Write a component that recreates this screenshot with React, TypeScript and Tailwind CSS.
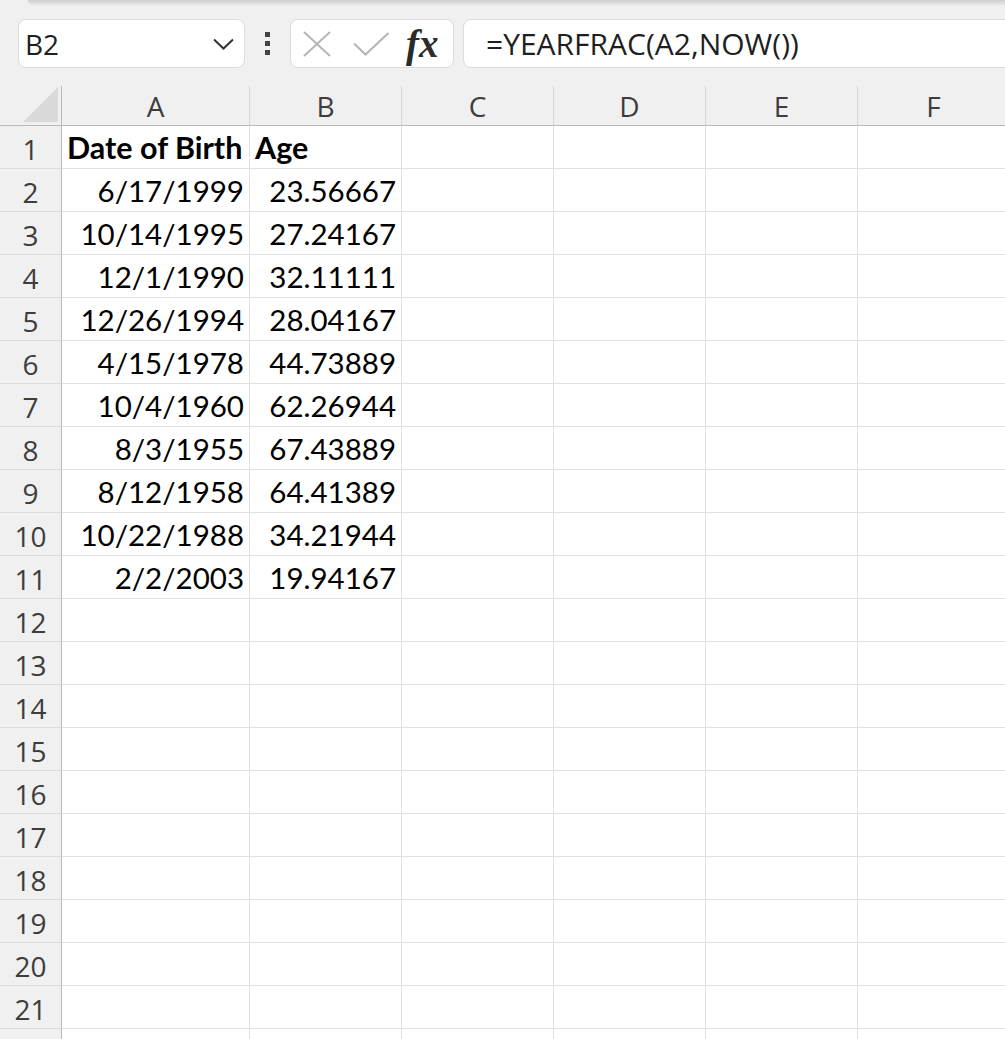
const COLS = ["A", "B", "C", "D", "E", "F"];
const WIDTHS = ["w-[188px]", "w-[152px]", "w-[152px]", "w-[152px]", "w-[152px]", "w-[152px]"];

const DATA: [string, string][] = [
  ["6/17/1999", "23.56667"],
  ["10/14/1995", "27.24167"],
  ["12/1/1990", "32.11111"],
  ["12/26/1994", "28.04167"],
  ["4/15/1978", "44.73889"],
  ["10/4/1960", "62.26944"],
  ["8/3/1955", "67.43889"],
  ["8/12/1958", "64.41389"],
  ["10/22/1988", "34.21944"],
  ["2/2/2003", "19.94167"],
];

function FormulaBar() {
  return (
    <div className="flex h-[49px] items-center pl-[18px]">
      <div className="flex h-[49px] w-[227px] items-center justify-between rounded-[8px] border border-[#dcdcdc] bg-white pl-[6px] pr-[10px]">
        <span className="text-[28px] leading-none text-[#1f1f1f]">B2</span>
        <svg width="21" height="12" viewBox="0 0 21 12" fill="none">
          <path d="M1 1.5 L10.5 10.5 L20 1.5" stroke="#333" strokeWidth="2" />
        </svg>
      </div>
      <div className="ml-[20px] flex w-[5px] flex-col gap-[4px]">
        <div className="h-[5px] w-[5px] bg-[#444]" />
        <div className="h-[5px] w-[5px] bg-[#444]" />
        <div className="h-[5px] w-[5px] bg-[#444]" />
      </div>
      <div className="ml-[20px] flex h-[49px] w-[164px] items-center rounded-[8px] border border-[#dcdcdc] bg-white">
        <svg className="ml-[12px]" width="28" height="26" viewBox="0 0 28 26" fill="none">
          <path d="M1 1 L27 25 M27 1 L1 25" stroke="#b5b5b5" strokeWidth="2" />
        </svg>
        <svg className="ml-[22px]" width="37" height="24" viewBox="0 0 37 24" fill="none">
          <path d="M1 11.5 L12.5 22.5 L35.5 1" stroke="#b5b5b5" strokeWidth="2" />
        </svg>
        <span className="ml-[16px] font-['Liberation_Serif'] text-[39px] font-bold italic leading-none text-[#2b2b2b]">
          fx
        </span>
      </div>
      <div className="ml-[9px] mr-[-20px] flex h-[49px] flex-1 items-center rounded-[8px] border border-[#dcdcdc] bg-white pl-[22px]">
        <span className="text-[30px] leading-none text-[#1f1f1f]">=YEARFRAC(A2,NOW())</span>
      </div>
    </div>
  );
}

function HeaderRow() {
  return (
    <div className="flex h-[40px] border-b border-[#bababa]">
      <div className="relative h-full w-[62px] shrink-0 border-r border-[#bababa]">
        <svg className="absolute left-[23px] top-[1px]" width="35" height="35" viewBox="0 0 35 35">
          <path d="M0 35 L35 35 L35 0 Z" fill="#d9d9d9" />
        </svg>
      </div>
      {COLS.map((c, i) => (
        <div
          key={c}
          className={`${WIDTHS[i]} flex shrink-0 items-center justify-center border-r border-[#d6d6d6] text-[28px] text-[#3d3d3d]`}
        >
          {c}
        </div>
      ))}
    </div>
  );
}

function BodyRow({ n }: { n: number }) {
  const isHead = n === 1;
  const vals: [string, string] = isHead ? ["Date of Birth", "Age"] : DATA[n - 2] ?? ["", ""];
  return (
    <div className="flex h-[43px] shrink-0">
      <div className="flex w-[62px] shrink-0 items-end justify-center border-r border-b border-r-[#bababa] border-b-[#dcdcdc] bg-[#f0f0f0] pb-[1px] text-[28px] leading-none text-[#3d3d3d]">
        <span className="pb-[4px]">{n}</span>
      </div>
      {COLS.map((c, i) => {
        const v = i < 2 ? vals[i] : "";
        return (
          <div
            key={c}
            className={`${WIDTHS[i]} flex shrink-0 items-end border-r border-b border-[#e1e1e1] bg-white px-[5px] pb-[6px] font-['Lato'] leading-none text-black ${
              isHead ? "justify-start text-[30.5px] font-bold" : "justify-end text-[29.5px]"
            }`}
          >
            {v}
          </div>
        );
      })}
    </div>
  );
}

export default function App() {
  const rows = Array.from({ length: 21 }, (_, i) => i + 1);
  return (
    <div className="h-[1039px] w-[1005px] overflow-hidden bg-[#f0f0f0] font-['Open_Sans',sans-serif]">
      <div className="h-[19px]">
        <div className="ml-[28px] h-[6px] rounded-bl-[6px] bg-gradient-to-b from-[#cdcdcd] to-[#efefef]" />
      </div>
      <FormulaBar />
      <div className="h-[18px]" />
      <HeaderRow />
      <div className="flex flex-col">
        {rows.map((n) => (
          <BodyRow key={n} n={n} />
        ))}
        <div className="flex h-[20px]">
          <div className="w-[62px] shrink-0 border-r border-[#bababa] bg-[#f0f0f0]" />
          {COLS.map((c, i) => (
            <div key={c} className={`${WIDTHS[i]} shrink-0 border-r border-[#e1e1e1] bg-white`} />
          ))}
        </div>
      </div>
    </div>
  );
}
